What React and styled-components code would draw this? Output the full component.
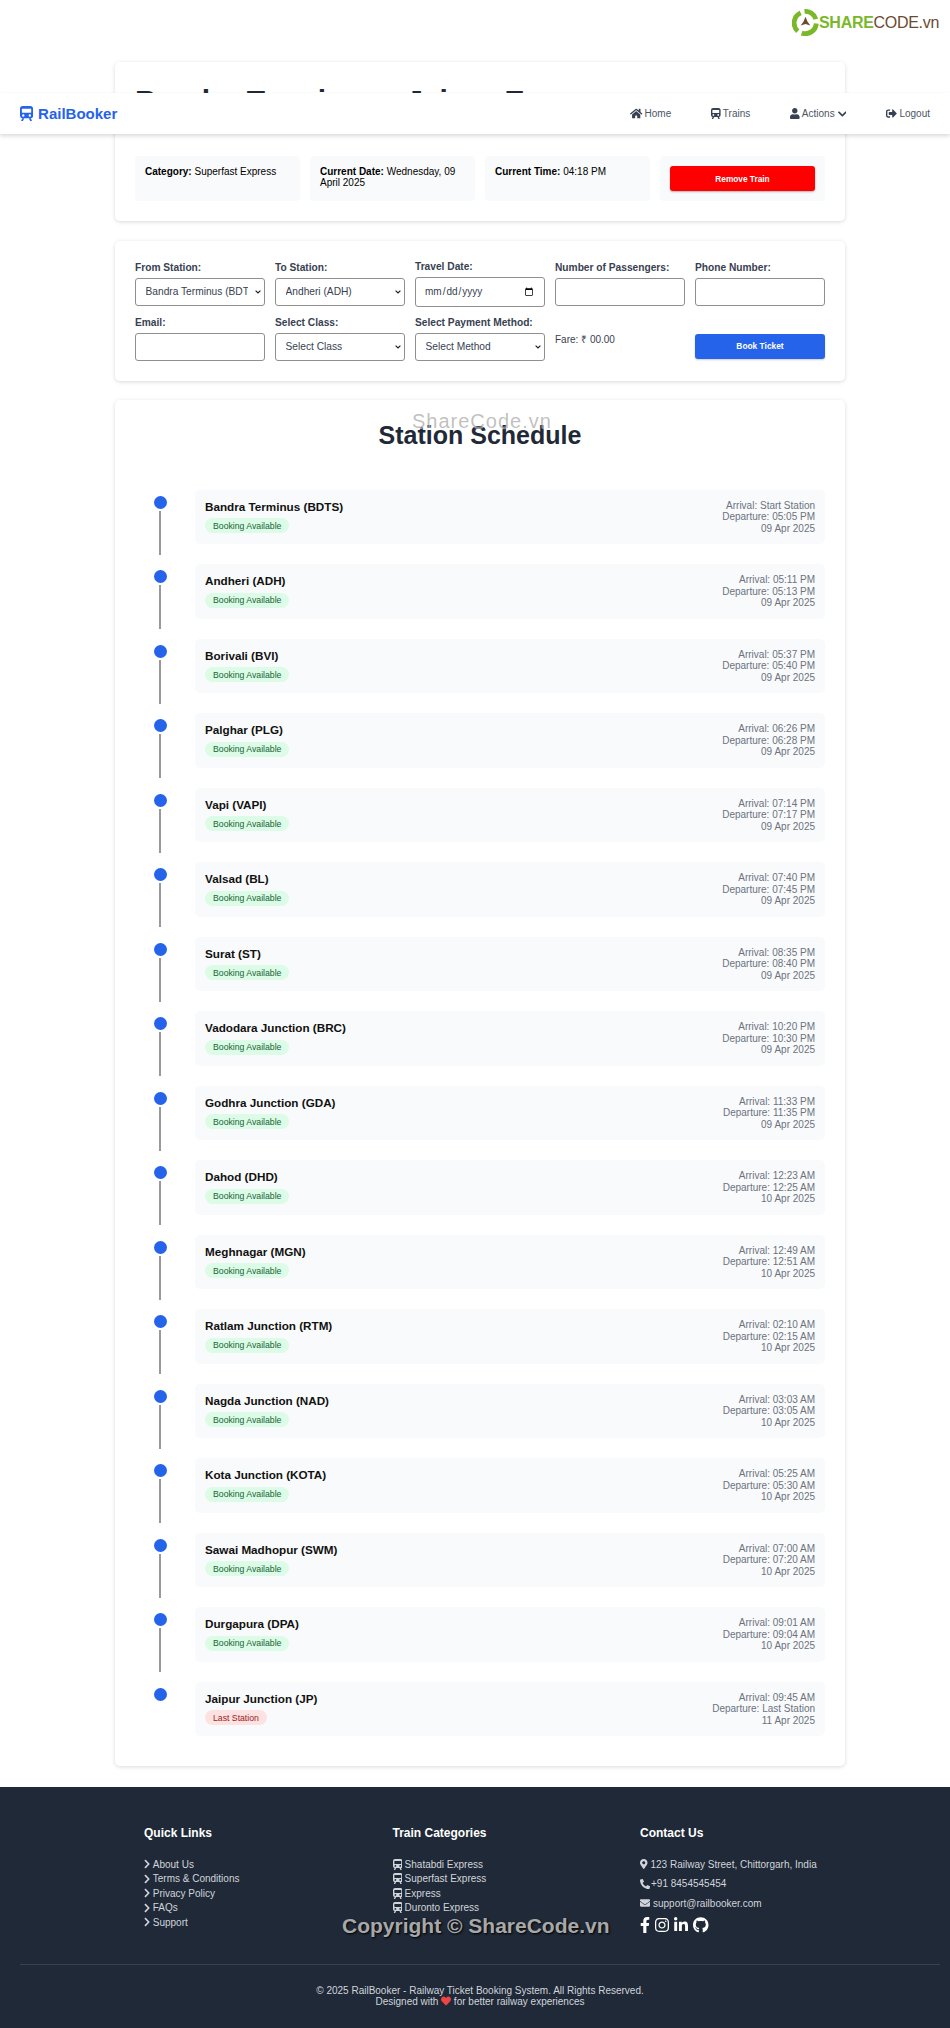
import React from 'react';
import styled, { createGlobalStyle } from 'styled-components';
import {
    FaHome, FaUser, FaChevronDown, FaChevronRight, FaSignOutAlt, FaMapMarkerAlt,
    FaPhoneAlt, FaEnvelope, FaFacebookF, FaInstagram, FaLinkedinIn, FaGithub, FaHeart,
} from 'react-icons/fa';

const stations = [
    ['Bandra Terminus (BDTS)', 'Start Station', '05:05 PM', '09 Apr 2025'],
    ['Andheri (ADH)', '05:11 PM', '05:13 PM', '09 Apr 2025'],
    ['Borivali (BVI)', '05:37 PM', '05:40 PM', '09 Apr 2025'],
    ['Palghar (PLG)', '06:26 PM', '06:28 PM', '09 Apr 2025'],
    ['Vapi (VAPI)', '07:14 PM', '07:17 PM', '09 Apr 2025'],
    ['Valsad (BL)', '07:40 PM', '07:45 PM', '09 Apr 2025'],
    ['Surat (ST)', '08:35 PM', '08:40 PM', '09 Apr 2025'],
    ['Vadodara Junction (BRC)', '10:20 PM', '10:30 PM', '09 Apr 2025'],
    ['Godhra Junction (GDA)', '11:33 PM', '11:35 PM', '09 Apr 2025'],
    ['Dahod (DHD)', '12:23 AM', '12:25 AM', '10 Apr 2025'],
    ['Meghnagar (MGN)', '12:49 AM', '12:51 AM', '10 Apr 2025'],
    ['Ratlam Junction (RTM)', '02:10 AM', '02:15 AM', '10 Apr 2025'],
    ['Nagda Junction (NAD)', '03:03 AM', '03:05 AM', '10 Apr 2025'],
    ['Kota Junction (KOTA)', '05:25 AM', '05:30 AM', '10 Apr 2025'],
    ['Sawai Madhopur (SWM)', '07:00 AM', '07:20 AM', '10 Apr 2025'],
    ['Durgapura (DPA)', '09:01 AM', '09:04 AM', '10 Apr 2025'],
    ['Jaipur Junction (JP)', '09:45 AM', 'Last Station', '11 Apr 2025'],
];

const quickLinks = ['About Us', 'Terms & Conditions', 'Privacy Policy', 'FAQs', 'Support'];
const categories = ['Shatabdi Express', 'Superfast Express', 'Express', 'Duronto Express'];

// same train drawing is used in the navbar and the footer
const TrainIcon = () => (
    <svg viewBox="0 0 14 16" fill="currentColor">
        <path
            fillRule="evenodd"
            d="M3 0h8a3 3 0 0 1 3 3v7.500a2.500 2.500 0 0 1-2.500 2.500h-9A2.500 2.500 0 0 1 0 10.500V3a3 3 0 0 1 3-3zM2.500 2.800a.5.5 0 0 0-.5.5v3.400a.5.5 0 0 0 .5.5h9a.5.5 0 0 0 .5-.5V3.300a.5.5 0 0 0-.5-.5zM3.500 8.800a1.300 1.300 0 1 0 0 2.600 1.300 1.300 0 0 0 0-2.600zm7 0a1.300 1.300 0 1 0 0 2.600 1.300 1.300 0 0 0 0-2.600z"
        />
        <path d="M2.300 13h2.200l-1.300 3H1.200zM9.500 13h2.200l1.100 3h-2z" />
    </svg>
);

const App = () => {
    return (
        <Page>
            <GlobalStyle />

            <LogoMark>
                <svg width="27" height="27" viewBox="0 0 28 28">
                    <path d="M13 2.500a11.500 11.500 0 0 1 11.800 8" fill="none" stroke="#7ab829" strokeWidth="5" />
                    <path d="M25.200 15a11.500 11.500 0 0 1-15.200 10" fill="none" stroke="#7ab829" strokeWidth="5" />
                    <path d="M6 23A11.500 11.500 0 0 1 9 4" fill="none" stroke="#7ab829" strokeWidth="5" />
                    <path d="M14 8l2 5 3 4-5-1.500-5 1.500 3-4z" fill="#6b4a32" />
                </svg>
                <LogoText><b>SHARE</b>CODE.vn</LogoText>
            </LogoMark>

            <NavBar>
                <Brand><TrainIcon />RailBooker</Brand>
                <NavLinks>
                    <NavLink $icon="12.4px"><FaHome />Home</NavLink>
                    <NavLink $icon="9.6px"><TrainIcon />Trains</NavLink>
                    <NavLink $icon="9.6px"><FaUser />Actions <NavChevron /></NavLink>
                    <NavLink $icon="11px"><FaSignOutAlt />Logout</NavLink>
                </NavLinks>
            </NavBar>

            <Main>
                <Card>
                    <TrainTitle>Bandra Terminus - Jaipur Express</TrainTitle>
                    <InfoGrid>
                        <InfoBox><b>Category:</b> Superfast Express</InfoBox>
                        <InfoBox><b>Current Date:</b> Wednesday, 09 April 2025</InfoBox>
                        <InfoBox><b>Current Time:</b> 04:18 PM</InfoBox>
                        <InfoBox><RemoveButton>Remove Train</RemoveButton></InfoBox>
                    </InfoGrid>
                </Card>

                <Card>
                    <BookingForm>
                        <Field>
                            <Label>From Station:</Label>
                            <Select defaultValue="Bandra Terminus (BDTS)">
                                <option>Bandra Terminus (BDTS)</option>
                            </Select>
                        </Field>
                        <Field>
                            <Label>To Station:</Label>
                            <Select defaultValue="Andheri (ADH)">
                                <option>Andheri (ADH)</option>
                            </Select>
                        </Field>
                        <Field>
                            <Label>Travel Date:</Label>
                            <DateInput type="date" />
                        </Field>
                        <Field>
                            <Label>Number of Passengers:</Label>
                            <TextInput type="number" />
                        </Field>
                        <Field>
                            <Label>Phone Number:</Label>
                            <TextInput type="text" />
                        </Field>
                        <Field>
                            <Label>Email:</Label>
                            <TextInput type="email" />
                        </Field>
                        <Field>
                            <Label>Select Class:</Label>
                            <Select><option>Select Class</option></Select>
                        </Field>
                        <Field>
                            <Label>Select Payment Method:</Label>
                            <Select><option>Select Method</option></Select>
                        </Field>
                        <Fare>Fare: ₹ 00.00</Fare>
                        <BookButton>Book Ticket</BookButton>
                    </BookingForm>
                </Card>

                <Card>
                    <ScheduleTitle>Station Schedule</ScheduleTitle>
                    <Timeline>
                        {stations.map(([name, arrival, departure, date], i) => {
                            const last = i === stations.length - 1;
                            return (
                                <Stop key={name}>
                                    <Marker>
                                        <Dot />
                                        {!last && <Line />}
                                    </Marker>
                                    <StopBox $last={last}>
                                        <div>
                                            <StationName>{name}</StationName>
                                            <Badge $last={last}>{last ? 'Last Station' : 'Booking Available'}</Badge>
                                        </div>
                                        <Times>
                                            <div>Arrival: {arrival}</div>
                                            <div>Departure: {departure}</div>
                                            <div>{date}</div>
                                        </Times>
                                    </StopBox>
                                </Stop>
                            );
                        })}
                    </Timeline>
                </Card>
            </Main>

            <Footer>
                <FooterColumns>
                    <div>
                        <FooterTitle>Quick Links</FooterTitle>
                        {quickLinks.map((l) => (
                            <FooterItem key={l} $icon="6.25px" $iconHeight="10px"><FaChevronRight />{l}</FooterItem>
                        ))}
                    </div>
                    <div>
                        <FooterTitle>Train Categories</FooterTitle>
                        {categories.map((c) => (
                            <FooterItem key={c} $icon="9.6px" $iconHeight="11px"><TrainIcon />{c}</FooterItem>
                        ))}
                    </div>
                    <div>
                        <FooterTitle>Contact Us</FooterTitle>
                        <ContactItem $icon="7.5px" $gap="3px"><FaMapMarkerAlt />123 Railway Street, Chittorgarh, India</ContactItem>
                        <ContactItem $icon="10px" $gap="1px"><FaPhoneAlt />+91 8454545454</ContactItem>
                        <ContactItem $icon="10px" $gap="3px"><FaEnvelope />support@railbooker.com</ContactItem>
                        <Socials>
                            <SocialIcon $width="10px"><FaFacebookF /></SocialIcon>
                            <SocialIcon $width="14px"><FaInstagram /></SocialIcon>
                            <SocialIcon $width="14px"><FaLinkedinIn /></SocialIcon>
                            <SocialIcon $width="15.5px"><FaGithub /></SocialIcon>
                        </Socials>
                    </div>
                </FooterColumns>
                <FooterBottom>
                    <div>© 2025 RailBooker - Railway Ticket Booking System. All Rights Reserved.</div>
                    <div>Designed with <HeartIcon /> for better railway experiences</div>
                </FooterBottom>
            </Footer>

            <WatermarkTop>ShareCode.vn</WatermarkTop>
            <WatermarkBottom>Copyright © ShareCode.vn</WatermarkBottom>
        </Page>
    );
};

export default App;

const GlobalStyle = createGlobalStyle`
    * {
        box-sizing: border-box;
    }

    body {
        margin: 0;
        background: #fff;
        font-family: "Liberation Sans", Arial, sans-serif;
        font-size: 10px;
        color: #000;
    }
`;

const Page = styled.div`
    position: relative;
    width: 950px;
    height: 2028px;
    overflow: hidden;
`;

const LogoMark = styled.div`
    position: absolute;
    top: 9px;
    left: 792px;
    display: flex;
    align-items: center;
`;

const LogoText = styled.span`
    font-size: 16px;
    letter-spacing: -0.3px;
    color: #6b4a32;

    b {
        color: #7ab829;
    }
`;

const NavBar = styled.nav`
    position: absolute;
    top: 93px;
    left: 0;
    right: 0;
    height: 41px;
    padding: 0 20px;
    display: flex;
    align-items: center;
    justify-content: space-between;
    background: #fff;
    box-shadow: 0 2px 4px rgba(0, 0, 0, 0.15);
    z-index: 2;
`;

const Brand = styled.div`
    display: flex;
    align-items: center;
    gap: 5px;
    font-size: 15px;
    font-weight: bold;
    color: #2563eb;

    svg {
        height: 15px;
        width: 13.1px;
    }
`;

const NavLinks = styled.div`
    display: flex;
    gap: 40px;
`;

const NavLink = styled.a`
    display: flex;
    align-items: center;
    gap: 2px;
    font-size: 10px;
    color: #4b5563;

    svg {
        height: 11px;
        width: ${({ $icon }) => $icon};
        flex-shrink: 0;
        color: #374151;
    }
`;

const NavChevron = styled(FaChevronDown)`
    && {
        height: 10px;
        width: 8.75px;
        margin-left: 1px;
    }
`;

const Main = styled.main`
    width: 730px;
    margin-left: 115px;
    padding-top: 62px;
    display: flex;
    flex-direction: column;
    gap: 19.5px;
`;

const Card = styled.section`
    padding: 20px;
    background: #fff;
    border-radius: 5px;
    box-shadow: 0 1px 4px rgba(0, 0, 0, 0.15);
`;

const TrainTitle = styled.h1`
    margin: 0 0 37px;
    font-size: 30px;
    line-height: 37px;
    color: #1f2937;
`;

const InfoGrid = styled.div`
    display: grid;
    grid-template-columns: repeat(4, 1fr);
    gap: 10px;
`;

const InfoBox = styled.div`
    padding: 10px;
    background: #f9fafb;
    border-radius: 4px;
`;

const RemoveButton = styled.button`
    display: block;
    width: 100%;
    height: 25px;
    border: none;
    border-radius: 3px;
    background: #ff0000;
    color: #fff;
    font-family: inherit;
    font-size: 8.3px;
    font-weight: bold;
    box-shadow: 0 1px 2px rgba(0, 0, 0, 0.3);
`;

const BookingForm = styled.form`
    display: grid;
    grid-template-columns: repeat(5, 1fr);
    column-gap: 10px;
    row-gap: 10px;
    align-items: center;
`;

const Field = styled.div`
    display: flex;
    flex-direction: column;
    gap: 5px;
`;

const Label = styled.label`
    font-size: 10.2px;
    font-weight: bold;
    color: #374151;
`;

const controlStyles = `
    width: 100%;
    height: 28px;
    border: 1px solid #8f8f8f;
    border-radius: 3px;
    background-color: #fff;
    font-family: inherit;
    font-size: 10px;
    color: #374151;
`;

const Select = styled.select`
    ${controlStyles}
    font-size: 10.2px;
    padding: 0 16.5px 0 9.5px;
    appearance: none;
    background-image: url("data:image/svg+xml,%3Csvg xmlns='http://www.w3.org/2000/svg' width='6' height='4' viewBox='0 0 6 4'%3E%3Cpath d='M.6.6 3 3 5.400.6' fill='none' stroke='%23222' stroke-width='1.200'/%3E%3C/svg%3E");
    background-repeat: no-repeat;
    background-position: right 3px center;
`;

const TextInput = styled.input`
    ${controlStyles}
    padding: 0 8px;
`;

const DateInput = styled.input`
    ${controlStyles}
    height: 30px;
    padding: 0 8px;
`;

const Fare = styled.div`
    color: #374151;
`;

const BookButton = styled.button`
    align-self: start;
    margin-top: 17px;
    height: 25px;
    border: none;
    border-radius: 3px;
    background: #2563eb;
    color: #fff;
    font-family: inherit;
    font-size: 8.4px;
    font-weight: bold;
    box-shadow: 0 1px 2px rgba(0, 0, 0, 0.2);
`;

const ScheduleTitle = styled.h2`
    margin: 0 0 39.5px;
    text-align: center;
    font-size: 25px;
    line-height: 30px;
    color: #1f2937;
`;

const Timeline = styled.div`
    display: flex;
    flex-direction: column;
`;

const Stop = styled.div`
    display: flex;
`;

const Marker = styled.div`
    width: 50px;
    margin-right: 10px;
    padding-top: 6px;
    flex-shrink: 0;
    display: flex;
    flex-direction: column;
    align-items: center;
`;

const Dot = styled.div`
    width: 13px;
    height: 13px;
    border-radius: 50%;
    background: #2563eb;
`;

const Line = styled.div`
    width: 2px;
    height: 44px;
    margin-top: 2px;
    background: #999;
`;

const StopBox = styled.div`
    flex: 1;
    height: 54.5px;
    margin-bottom: ${({ $last }) => ($last ? '10px' : '20px')};
    padding: 10px;
    display: flex;
    justify-content: space-between;
    background: #f9fafb;
    border-radius: 5px;
`;

const StationName = styled.div`
    font-size: 11.7px;
    font-weight: bold;
    color: #111;
`;

const Badge = styled.span`
    display: inline-block;
    margin-top: 5.5px;
    padding: 2.5px 8px;
    border-radius: 10px;
    font-size: 8.7px;
    background: ${({ $last }) => ($last ? '#fee2e2' : '#dcfce7')};
    color: ${({ $last }) => ($last ? '#991b1b' : '#166534')};
`;

const Times = styled.div`
    text-align: right;
    line-height: 11.5px;
    color: #6b7280;
`;

const Footer = styled.footer`
    margin-top: 20.5px;
    height: 241px;
    background: #1f2937;
    color: #d1d5db;
    padding-top: 39.5px;
`;

const FooterColumns = styled.div`
    height: 137.5px;
    padding-left: 144px;
    display: grid;
    grid-template-columns: 248.5px 247.5px 1fr;
`;

const FooterTitle = styled.h3`
    margin: 0 0 18.5px;
    font-size: 12px;
    line-height: 14px;
    color: #fff;
`;

const FooterItem = styled.div`
    display: flex;
    align-items: center;
    gap: 2.5px;
    height: 11.5px;
    margin-bottom: 3px;

    svg {
        height: ${({ $iconHeight }) => $iconHeight};
        width: ${({ $icon }) => $icon};
        flex-shrink: 0;
    }
`;

const ContactItem = styled.div`
    display: flex;
    align-items: center;
    gap: ${({ $gap }) => $gap};
    height: 11.5px;
    margin-bottom: 8px;

    svg {
        height: 10px;
        width: ${({ $icon }) => $icon};
        flex-shrink: 0;
    }
`;

const Socials = styled.div`
    display: flex;
    align-items: center;
    gap: 5px;
    color: #fff;
`;

const SocialIcon = styled.a`
    display: flex;

    svg {
        height: 16px;
        width: ${({ $width }) => $width};
    }
`;

const FooterBottom = styled.div`
    margin: 0 10px 0 20px;
    padding-top: 20px;
    border-top: 1px solid #374151;
    text-align: center;
    line-height: 11.5px;
`;

const HeartIcon = styled(FaHeart)`
    color: #ef4444;
    vertical-align: -1px;
`;

const WatermarkTop = styled.div`
    position: absolute;
    top: 410px;
    left: 412px;
    font-size: 20px;
    letter-spacing: 1px;
    color: rgba(140, 140, 140, 0.55);
    text-shadow: 1px 1px 1px rgba(255, 255, 255, 0.6);
`;

const WatermarkBottom = styled.div`
    position: absolute;
    top: 1914px;
    left: 342px;
    font-size: 21px;
    font-weight: bold;
    color: #a8a8a8;
    text-shadow: 1px 1px 2px #000;
`;
